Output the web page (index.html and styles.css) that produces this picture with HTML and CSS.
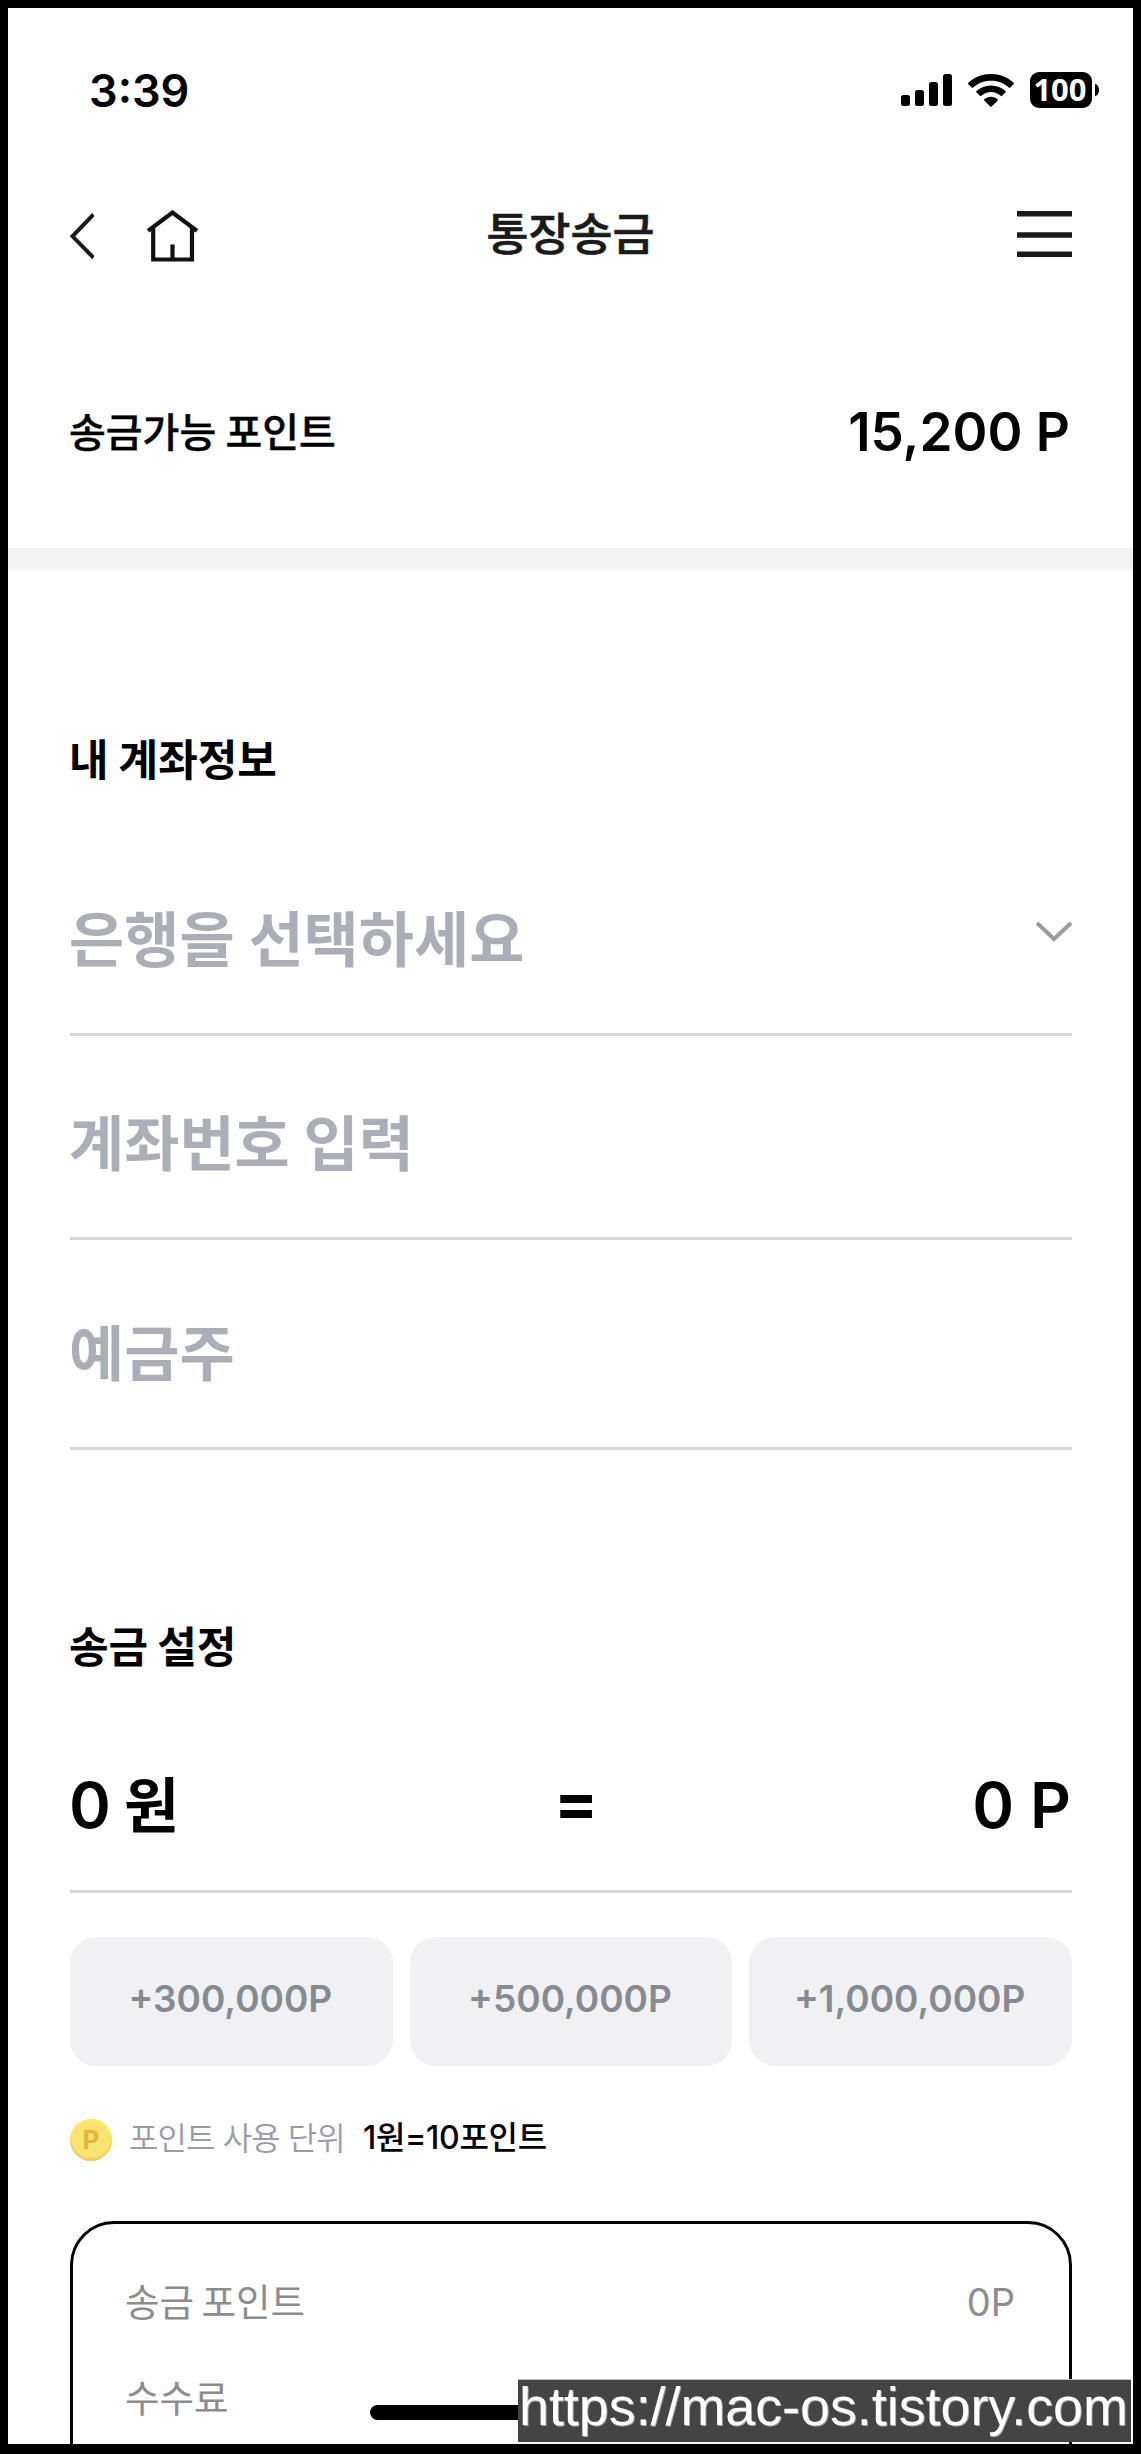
FILE: index.html
```
<!DOCTYPE html>
<html lang="ko">
<head>
<meta charset="utf-8">
<title>통장송금</title>
<link rel="stylesheet" href="styles.css">
</head>
<body>
<div class="screen">
  <div class="status-bar">
    <span class="clock">3:39</span>
    <div class="status-icons">
      <svg class="signal" width="51" height="32" viewBox="0 0 51 32">
        <rect x="0" y="21" width="9" height="11" rx="2.5"/>
        <rect x="14" y="16" width="9" height="16" rx="2.5"/>
        <rect x="28" y="8" width="9" height="24" rx="2.5"/>
        <rect x="42" y="0" width="9" height="32" rx="2.5"/>
      </svg>
      <svg class="wifi" width="46" height="33" viewBox="0 0 46 33">
        <path d="M23 0C14.300 0 6.300 3.300.400 8.800Q-.3 9.500.400 10.200L3.700 13.600Q4.400 14.300 5.100 13.600C9.800 9.300 16 6.700 23 6.700S36.200 9.300 40.900 13.600Q41.600 14.300 42.300 13.600L45.600 10.200Q46.300 9.500 45.600 8.800C39.700 3.300 31.700 0 23 0Z"/>
        <path d="M23 11.400C17.400 11.400 12.300 13.500 8.500 17Q7.800 17.700 8.500 18.400L11.900 21.800Q12.600 22.500 13.300 21.800C15.900 19.500 19.300 18.100 23 18.100S30.100 19.500 32.700 21.800Q33.400 22.500 34.100 21.800L37.500 18.400Q38.200 17.700 37.500 17C33.700 13.500 28.600 11.400 23 11.400Z"/>
        <path d="M23 22.800C20.400 22.800 18.100 23.800 16.400 25.300Q15.700 26 16.400 26.700L22.300 32.600Q23 33.300 23.700 32.600L29.600 26.700Q30.300 26 29.600 25.300C27.900 23.800 25.600 22.800 23 22.800Z"/>
      </svg>
      <div class="battery"><span class="battery-level">100</span><span class="battery-tip"></span></div>
    </div>
  </div>

  <header class="nav">
    <div class="nav-left">
      <svg width="24" height="46" viewBox="0 0 24 46"><path d="M23.500 1.500L2.500 23.300L23.500 44.700" fill="none" stroke="#1a1a1a" stroke-width="4"/></svg>
      <svg width="51" height="52" viewBox="0 0 51 52"><g fill="none" stroke="#111" stroke-width="4.200"><path d="M1 20.800L25.500 2.500L50 20.800"/><path d="M6.200 18V49.500H45V18"/><path d="M25.500 34.500V49"/></g></svg>
    </div>
    <h1 class="title">통장송금</h1>
    <svg class="menu" width="55" height="46" viewBox="0 0 55 46"><path d="M0 2.800H55M0 24H55M0 43.200H55" stroke="#1a1a1a" stroke-width="5.400"/></svg>
  </header>

  <section class="balance">
    <span class="balance-label">송금가능 포인트</span>
    <strong class="balance-value">15,200 P</strong>
  </section>
  <div class="divider"></div>

  <main class="content">
    <h2 class="heading">내 계좌정보</h2>
    <div class="field bank">
      <span>은행을 선택하세요</span>
      <svg width="36" height="20" viewBox="0 0 36 20"><path d="M1 1L18 17L35 1" fill="none" stroke="#9b9b9b" stroke-width="4"/></svg>
    </div>
    <div class="field account">계좌번호 입력</div>
    <div class="field holder">예금주</div>

    <h2 class="heading transfer">송금 설정</h2>
    <div class="amount">
      <span class="won">0<span class="unit">원</span></span>
      <span class="equals">=</span>
      <span class="point">0 P</span>
    </div>
    <div class="presets">
      <button class="preset">+300,000P</button>
      <button class="preset">+500,000P</button>
      <button class="preset">+1,000,000P</button>
    </div>
    <div class="rate">
      <span class="coin">P</span>
      <span class="rate-label">포인트 사용 단위</span>
      <span class="rate-value">1원=10포인트</span>
    </div>
    <div class="summary">
      <div class="summary-row"><span>송금 포인트</span><span class="summary-value">0P</span></div>
      <div class="summary-row"><span>수수료</span></div>
    </div>
  </main>

  <div class="home-indicator"></div>
  <div class="watermark">https://mac-os.tistory.com</div>
</div>
</body>
</html>
```
FILE: styles.css
```
* { box-sizing: border-box; }
body { margin: 0; }

.screen {
  position: relative;
  width: 1141px;
  height: 2454px;
  overflow: hidden;
  border: 8px solid #000;
  border-bottom-width: 10px;
  background: #fff;
  color: #000;
  font-family: Inter, "Noto Sans CJK KR", sans-serif;
  white-space: nowrap;
}

.status-bar {
  display: flex;
  align-items: center;
  justify-content: space-between;
  height: 164px;
  padding: 0 34px 0 81px;
}
.clock { padding-top: 1px; font-size: 45px; font-weight: 590; line-height: 60px; }
.status-icons { display: flex; align-items: center; }
.wifi { margin-left: 16px; }
.battery { display: flex; align-items: center; margin-left: 16px; }
.battery-level {
  width: 62px;
  height: 36px;
  padding-right: 2px;
  border-radius: 9px;
  background: #000;
  color: #fff;
  font: 700 31px/34px "Noto Sans", sans-serif;
  text-align: center;
}
.battery-tip {
  width: 4px;
  height: 12px;
  margin-left: 3px;
  border-radius: 0 4px 4px 0 / 0 6px 6px 0;
  background: #000;
}

.nav {
  display: grid;
  grid-template-columns: 1fr auto 1fr;
  align-items: center;
  height: 118px;
  padding: 0 61px 0 62px;
}
.nav-left { display: flex; align-items: center; gap: 53px; padding-top: 10px; }
.title {
  margin: 0 1px 0 0;
  color: #1a1a1a;
  font: 500 45.700px/66px "Noto Sans CJK KR", sans-serif;
  -webkit-text-stroke: 0.600px;
}
.menu { justify-self: end; margin-top: 6px; }

.balance {
  display: flex;
  align-items: center;
  justify-content: space-between;
  height: 258px;
  padding: 22px 63px 0 61px;
}
.balance-label {
  font: 500 40px/60px "Noto Sans CJK KR", sans-serif;
  word-spacing: -2px;
  -webkit-text-stroke: 0.400px;
}
.balance-value { padding-top: 3px; font-size: 53px; font-weight: 560; line-height: 64px; }
.divider { height: 22px; background: #f4f4f4; }

.content { padding: 0 61px 0 62px; }
.heading {
  margin: 0 0 0 -1px;
  padding-top: 157px;
  font: 700 43px/60px "Noto Sans CJK KR", sans-serif;
  word-spacing: -2px;
}
.heading.transfer { padding-top: 164px; word-spacing: -3px; }

.field {
  border-bottom: 3px solid #d7d7d7;
  color: #abaeb6;
  font: 700 60px/80px "Noto Sans CJK KR", sans-serif;
  text-indent: -1px;
  word-spacing: -3px;
}
.bank {
  display: flex;
  align-items: center;
  justify-content: space-between;
  padding: 109px 0 57px;
}
.bank svg { margin-bottom: 8px; }
.account { padding: 64px 0 57px; }
.holder { padding: 70px 0 57px; }

.amount {
  display: grid;
  grid-template-columns: 1fr auto 1fr;
  align-items: baseline;
  height: 219px;
  padding: 87px 1px 0 0;
  border-bottom: 3px solid #d7d7d7;
  font-size: 63.500px;
  font-weight: 560;
  line-height: 80px;
}
.won { margin-left: -1px; }
.unit {
  margin-left: 13px;
  font: 700 60px/0 "Noto Sans CJK KR", sans-serif;
}
.equals {
  margin-right: -11px;
  font: 700 58px/84px "Noto Sans CJK KR", sans-serif;
  -webkit-text-stroke: 2px;
}
.point { text-align: right; }

.presets {
  display: grid;
  grid-template-columns: repeat(3, 1fr);
  gap: 17px;
  margin-top: 44px;
}
.preset {
  height: 129px;
  padding: 0 2px 5px 0;
  border: 0;
  border-radius: 26px;
  background: #f1f1f4;
  color: #868b92;
  font: 580 37px/48px Inter, sans-serif;
}

.rate { display: flex; align-items: center; height: 42px; margin-top: 53px; font-size: 32px; line-height: 40px; }
.coin {
  width: 42px;
  height: 42px;
  border-radius: 50%;
  background: #fae36f;
  box-shadow: inset 0 -3px 2px #ecce66, inset 0 2px 2px #fcec70;
  color: #e3b53f;
  font-size: 26px;
  font-weight: 700;
  line-height: 42px;
  text-align: center;
}
.rate-label {
  margin: 0 18px 8px 17px;
  color: #999ca5;
  font-family: "Noto Sans CJK KR", sans-serif;
  font-weight: 350;
  letter-spacing: -0.900px;
}
.rate-value { margin-bottom: 5px; font-weight: 500; letter-spacing: -0.300px; }

.summary {
  height: 420px;
  margin-top: 60px;
  padding: 46px 54px 0 52px;
  border: 3px solid #000;
  border-radius: 44px;
  color: #8c8c8c;
}
.summary-row {
  display: flex;
  align-items: baseline;
  justify-content: space-between;
  margin-bottom: 34px;
  font: 400 37.500px/60px "Noto Sans CJK KR", sans-serif;
  word-spacing: -3px;
}
.summary-value { font-family: Inter, sans-serif; font-size: 38px; }

.home-indicator {
  position: absolute;
  left: 362px;
  bottom: 24px;
  width: 402px;
  height: 15px;
  border-radius: 8px;
  background: #000;
}
.watermark {
  position: absolute;
  right: 2px;
  bottom: 2px;
  width: 613px;
  height: 63px;
  padding-left: 1px;
  border-top: 1px solid #c4c4c4;
  background: #444;
  color: #fff;
  font: 53.800px/52px "Liberation Sans", Arial, sans-serif;
  text-shadow: 1px 1px 0 #a8a8a8;
}
```
